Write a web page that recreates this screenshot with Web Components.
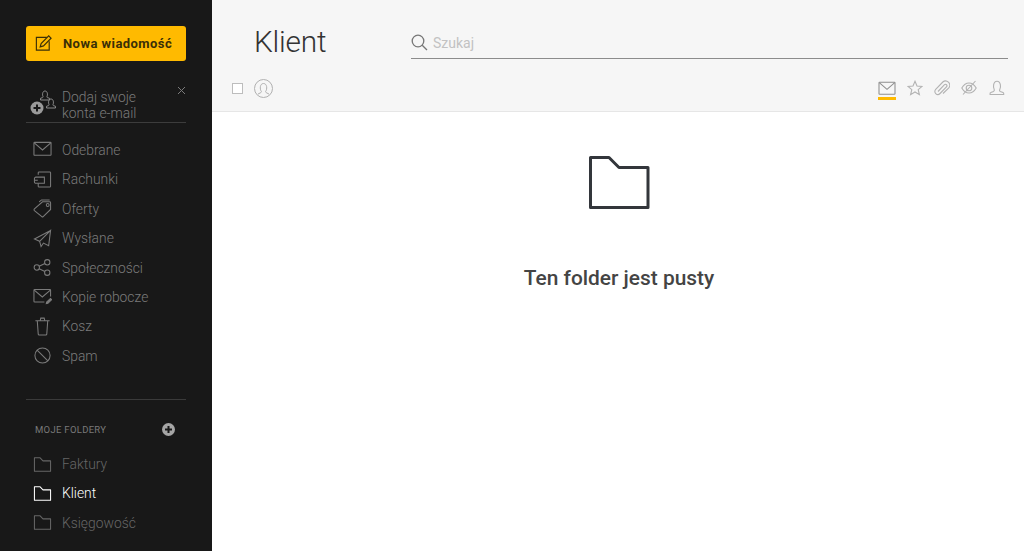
<!DOCTYPE html>
<html lang="pl"><head><meta charset="utf-8"><title>Klient</title>
<style>
html,body{margin:0;height:100%;overflow:hidden;font-family:Roboto,"Liberation Sans",sans-serif}
</style></head><body>
<mail-app></mail-app>
<script>
const I={
mail:'<rect x="1" y="2.5" width="18" height="13.5" rx=".6"/><path d="M1.3 3l8.700 7.500L18.700 3"/>',
bills:'<path d="M5.500 5V3a1 1 0 0 1 1-1h11a1 1 0 0 1 1 1v14a1 1 0 0 1-1 1h-11a1 1 0 0 1-1-1v-3"/><path d="M3 7.500h9v6.500H3a1.500 1.500 0 0 1-1.500-1.500v-3.500A1.500 1.500 0 0 1 3 7.500z"/><path d="M1.500 10.800h3.500"/>',
tag:'<path d="M1.500 10.500L10 3h7.500a1 1 0 0 1 1 1v7l-7.800 7.500a1 1 0 0 1-1.400 0l-7.800-6.200a1.200 1.200 0 0 1 0-1.800z"/><circle cx="15.500" cy="6.300" r="1.500"/><path d="M6.500 3L9 1h8.500"/>',
send:'<path d="M18.500 1.500L1.500 10.500l5.500 2.500zM18.500 1.500L7 13l1.500 5.500 2.500-3.700 5.500 2.700zM8.500 18.500L7 13"/>',
share:'<circle cx="4" cy="10" r="2.800"/><circle cx="15" cy="4.500" r="2.800"/><circle cx="15" cy="15.500" r="2.800"/><path d="M6.500 8.700l6-3M6.500 11.300l6 3"/>',
draft:'<path d="M18.500 10V3.500a.8.800 0 0 0-.8-.8H1.800a.8.800 0 0 0-.8.800V15a.8.800 0 0 0 .8.800H12"/><path d="M1.300 3.200L9.800 10.500 18.300 3.200"/><path d="M14 17.500l.4-1.700 4-3.800 1.300 1.300-4 3.800z" fill="currentColor"/>',
trash:'<path d="M2.500 4h15M7.500 4l.7-2.800h3.600l.7 2.800M4.500 4l1 14a1 1 0 0 0 1 .9h7a1 1 0 0 0 1-.9l1-14"/>',
spam:'<circle cx="10" cy="10" r="8"/><path d="M4.300 4.300l11.400 11.400"/>',
folder:'<path d="M1.500 3h6l3 3.200h8v11H1.500z" stroke-linejoin="round"/>',
edit:'<path d="M13.500 3.500H2.500v13.500h13.500V7.500"/><path d="M6.500 13.500l1-3.500 8-8 2.500 2.500-8 8z"/>',
search:'<circle cx="7" cy="7" r="5.800"/><path d="M11.200 11.200L16 16"/>',
x:'<path d="M1 1l7 7M8 1L1 8"/>',
star:'<path d="M8 1.300l2 4.700 5 .4-3.800 3.300 1.200 4.900L8 12l-4.400 2.600 1.200-4.900L1 6.400l5-.4z"/>',
clip:'<path d="M4 11.500l6.500-6.800a1.500 1.500 0 0 1 2.200 2L6 13.500a3 3 0 0 1-4.300-4.200L8.800 2a4.200 4.200 0 0 1 6 5.800L9 13.500"/>',
eye:'<path d="M.8 8c2-3.500 4.500-5 7.200-5s5.200 1.500 7.200 5c-2 3.500-4.500 5-7.200 5S2.800 11.500.8 8z"/><circle cx="8" cy="8" r="2.800"/><path d="M2 14.500L14.500 1"/>',
user:'<path d="M5.200 9.500C4 7.500 4 1.200 8 1.200s4 6.300 2.800 8.300c-.5.8-.3 1.500.5 1.900l2.700 1a1 1 0 0 1 .7 1V14.500H1.100v-1.100a1 1 0 0 1 .7-1l2.700-1c.8-.4 1-1.100.7-1.900z"/>'
};
const svg=(n,w,h,vb,sw)=>`<svg width="${w}" height="${h}" viewBox="0 0 ${vb}" fill="none" stroke="currentColor" stroke-width="${sw}" aria-hidden="true">${I[n]}</svg>`;

class NavItem extends HTMLElement{
 constructor(){super();const n=this.getAttribute('icon');
 this.attachShadow({mode:'open'}).innerHTML=`<style>
 :host{display:flex;align-items:center;height:29.4px;padding-left:33px;color:#7b7b7b;font-size:13.850px;font-weight:300}
 :host([active]){color:#fff;font-weight:300}
 :host([dim]){color:#666}
 svg{flex:none;display:block}
 span{margin-left:10px}
 </style>${svg(n,19,19,'20 20',1.100)}<span><slot></slot></span>`}
}
customElements.define('nav-item',NavItem);

class MailSidebar extends HTMLElement{
 constructor(){super();this.attachShadow({mode:'open'}).innerHTML=`<style>
 :host{display:flex;flex-direction:column;flex:none;width:212px;height:551px;background:#181818;box-sizing:border-box;padding:26px 26px 0;overflow:hidden}
 .new{display:flex;align-items:center;height:35px;background:#ffba00;border-radius:3px;color:#3a2f07;font-size:13px;font-weight:700;letter-spacing:.45px;padding-left:8px;box-sizing:border-box}
 .new svg{display:block;margin-right:10px}
 .promo{position:relative;display:flex;margin-top:25px;height:33px;padding-top:3px;border-bottom:1px solid #3c3c3c;color:#7b7b7b;font-size:13.850px;font-weight:300;line-height:16px;padding-left:36px;box-sizing:content-box}
 .promo .close{position:absolute;right:0;top:0;color:#7b7b7b}
 .promo .pic{position:absolute;left:4px;top:4px;color:#8a8a8a}
 nav{margin-top:12.300px;margin-left:-26px;margin-right:-26px}
 hr{border:0;border-top:1px solid #3a3a3a;margin:28.500px 0 0}
 .head{display:flex;align-items:center;justify-content:space-between;margin-top:23px;margin-bottom:12.400px;height:14px;padding:0 11.500px 0 9px;font-size:9.500px;letter-spacing:.3px;color:#787878;font-weight:400}
 .plus{width:13px;height:13px;display:block}
 </style>
 <div class="new">${svg('edit',19,19,'20 20',1.200)}<span>Nowa wiadomość</span></div>
 <div class="promo">
  <svg class="pic" width="28" height="27" viewBox="0 0 28 27" fill="none" stroke="currentColor" stroke-width="1" aria-hidden="true">
   <path d="M13 6.500C12.200 5 12.300 1 15 1s2.800 4 2 5.500c-.3.500 0 .9.500 1.100l2 .7V10h-9V8.300l2-.7c.5-.2.800-.6.500-1.100z"/>
   <path d="M19 14.500c-.8-1.500-.7-5.500 2-5.500s2.800 4 2 5.500c-.3.500 0 .9.500 1.100l2 .7V18h-9v-1.700l2-.7c.5-.2.800-.6.500-1.100z"/>
   <circle cx="7" cy="18" r="6.500" fill="#9a9a9a" stroke="none"/><path d="M3.500 18h7M7 14.500v7" stroke="#181818" stroke-width="2"/>
  </svg>
  <span>Dodaj swoje<br>konta e-mail</span>
  <svg class="close" width="9" height="9" viewBox="0 0 9 9" fill="none" stroke="currentColor" aria-hidden="true">${I.x}</svg>
 </div>
 <nav>
  <nav-item icon="mail">Odebrane</nav-item>
  <nav-item icon="bills">Rachunki</nav-item>
  <nav-item icon="tag">Oferty</nav-item>
  <nav-item icon="send">Wysłane</nav-item>
  <nav-item icon="share">Społeczności</nav-item>
  <nav-item icon="draft">Kopie robocze</nav-item>
  <nav-item icon="trash">Kosz</nav-item>
  <nav-item icon="spam">Spam</nav-item>
 </nav>
 <hr>
 <div class="head"><span>MOJE FOLDERY</span>
  <svg class="plus" viewBox="0 0 13 13" aria-hidden="true"><circle cx="6.500" cy="6.500" r="6.500" fill="#a5a5a5"/><path d="M3 6.500h7M6.500 3v7" stroke="#181818" stroke-width="2"/></svg>
 </div>
 <nav style="margin-top:0">
  <nav-item icon="folder" dim>Faktury</nav-item>
  <nav-item icon="folder" active>Klient</nav-item>
  <nav-item icon="folder" dim>Księgowość</nav-item>
 </nav>`}
}
customElements.define('mail-sidebar',MailSidebar);

class MailHeader extends HTMLElement{
 constructor(){super();this.attachShadow({mode:'open'}).innerHTML=`<style>
 :host{display:block;flex:none;height:112px;box-sizing:border-box;background:#f6f6f6;border-bottom:1px solid #e6e6e6}
 .top{display:flex;align-items:flex-start;height:71px;padding-right:16px}
 h1{margin:0;width:199px;padding:22px 0 0 42px;box-sizing:border-box;font-size:29.800px;line-height:40px;font-weight:300;color:#333;flex:none;letter-spacing:-.2px}
 .search{flex:1;display:flex;align-items:center;height:31px;padding-top:1px;margin-top:26px;border-bottom:1px solid #8c8c8c;color:#c2c2c2;font-size:14px;font-weight:400;box-sizing:content-box}
 .search svg{color:#777;margin-right:5px;display:block}
 .bar{display:flex;align-items:center;height:34px;padding:0 19px 0 20px}
 .cb{width:9px;height:9px;border:1px solid #bdbdbd;background:#fff}
 .who{margin-left:11px;color:#b0b0b0;display:block}
 .tabs{margin-left:auto;display:flex;align-items:center;gap:11px}
 .tab{display:flex;position:relative;color:#b2b2b2}
 .tab svg{display:block}
 .tab.on{color:#8f8f8f;margin-right:0}
 .tab.last{margin-left:1px;margin-right:-1px}
 .tab.on::after{content:"";position:absolute;left:0;right:0;top:17px;height:3px;background:#ffba00}
 </style>
 <div class="top"><h1>Klient</h1><div class="search">${svg('search',17,17,'17 17',1.300)}<span>Szukaj</span></div></div>
 <div class="bar"><span class="cb"></span>
  <svg class="who" width="19" height="19" viewBox="0 0 19 19" fill="none" stroke="currentColor" aria-hidden="true"><circle cx="9.500" cy="9.500" r="9"/><path d="M7.300 12.300c-1.600-2-1.600-7.800 2.200-7.800s3.800 5.800 2.200 7.800c-.4.500 0 1 .5 1.300l2.800 1.500M7.300 12.300c.4.500 0 1-.5 1.300L4 15.100"/></svg>
  <div class="tabs" style="padding-right:1px">
   <span class="tab on">${svg('mail',18,16,'20 18',1.200)}</span>
   <span class="tab">${svg('star',16,16,'16 16',1.100)}</span>
   <span class="tab">${svg('clip',16,16,'16 16',1.100)}</span>
   <span class="tab">${svg('eye',16,16,'16 16',1.100)}</span>
   <span class="tab last">${svg('user',16,16,'16 16',1.100)}</span>
  </div>
 </div>`}
}
customElements.define('mail-header',MailHeader);

class EmptyState extends HTMLElement{
 constructor(){super();this.attachShadow({mode:'open'}).innerHTML=`<style>
 :host{display:flex;flex:1;flex-direction:column;align-items:center;padding:43px 0 0 2px;background:#fff}
 svg{display:block;color:#33363b}
 p{margin:55px 0 0;font-size:20.900px;line-height:26px;font-weight:500;color:#444}
 </style>
 <svg width="62" height="55" viewBox="0 0 62 55" fill="none" stroke="currentColor" stroke-width="3" stroke-linejoin="round" aria-hidden="true"><path d="M2.500 2.500h18.500l10 10h29v40H2.500z"/></svg>
 <p><slot></slot></p>`}
}
customElements.define('empty-state',EmptyState);

class MailApp extends HTMLElement{
 constructor(){super();this.attachShadow({mode:'open'}).innerHTML=`<style>
 :host{display:flex;width:1024px;height:551px;overflow:hidden}
 main{flex:1;display:flex;flex-direction:column;min-width:0}
 </style><mail-sidebar></mail-sidebar><main><mail-header></mail-header><empty-state>Ten folder jest pusty</empty-state></main>`}
}
customElements.define('mail-app',MailApp);
</script>
</body></html>
